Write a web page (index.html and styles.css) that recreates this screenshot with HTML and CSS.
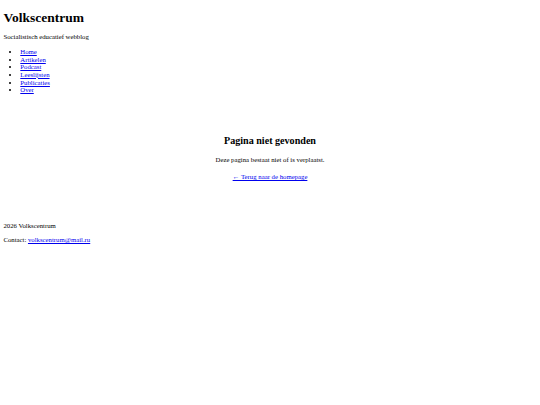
FILE: index.html
```html
<!DOCTYPE html>
<html lang="nl">
<head>
    <meta charset="UTF-8">
    <meta name="viewport" content="width=device-width, initial-scale=1.0">
    <title>Pagina niet gevonden - Volkscentrum</title>
    <link rel="stylesheet" href="styles.css">
</head>
<body>
    <header class="site-header">
        <h1>Volkscentrum</h1>
        <p class="tagline">Socialistisch educatief webblog</p>
        <nav>
            <ul class="nav-list">
                <li><a href="#">Home</a></li>
                <li><a href="#">Artikelen</a></li>
                <li><a href="#">Podcast</a></li>
                <li><a href="#">Leeslijsten</a></li>
                <li><a href="#">Publicaties</a></li>
                <li><a href="#">Over</a></li>
            </ul>
        </nav>
    </header>

    <main class="not-found">
        <h2>Pagina niet gevonden</h2>
        <p>Deze pagina bestaat niet of is verplaatst.</p>
        <p class="back"><a href="#">&larr; Terug naar de homepage</a></p>
    </main>

    <footer class="site-footer">
        <p>2026 Volkscentrum</p>
        <p>Contact: <a href="#">volkscentrum@mail.ru</a></p>
    </footer>
</body>
</html>
```

FILE: styles.css
```css
body {
    font-family: 'Liberation Serif', 'Times New Roman', serif;
    font-size: 6.75px;
    line-height: 7.75px;
    margin: 3.4px;
    color: #000;
    background-color: #fff;
}
a {
    color: #0000ee;
}
p {
    margin: 6.75px 0;
}
h1 {
    font-size: 13.5px;
    line-height: 15.5px;
    margin: 6.5px 0 8px;
}
.tagline {
    margin: 0;
}
.nav-list {
    margin: 7px 0 6.75px;
    padding-left: 16.9px;
}
.nav-list li {
    line-height: 7.6px;
}
.not-found {
    text-align: center;
    padding: 26.5px 0 28px;
}
.not-found h2 {
    font-size: 10.1px;
    line-height: 11.6px;
    margin: 8.4px 0 9.4px;
}
.not-found .back {
    margin-top: 9.1px;
}
.site-footer p {
    margin: 6.5px 0;
}
```
